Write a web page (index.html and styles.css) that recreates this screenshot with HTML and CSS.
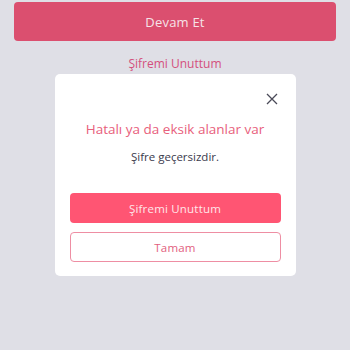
FILE: index.html
```html
<!DOCTYPE html>
<html lang="tr">
<head>
<meta charset="utf-8">
<link rel="stylesheet" href="styles.css">
</head>
<body>
<div class="page">
  <button class="primary-page">Devam Et</button>
  <a class="forgot-link">Şifremi Unuttum</a>
</div>
<div class="overlay">
  <div class="modal">
    <div class="modal-head">
      <svg class="close" width="12" height="12" viewBox="0 0 12 12"><path d="M1 1L11 11M11 1L1 11" stroke="#4a4a58" stroke-width="1.3" fill="none"/></svg>
    </div>
    <div class="title">Hatalı ya da eksik alanlar var</div>
    <div class="message">Şifre geçersizdir.</div>
    <button class="btn btn-fill">Şifremi Unuttum</button>
    <button class="btn btn-outline">Tamam</button>
  </div>
</div>
</body>
</html>
```
FILE: styles.css
```css
html, body { margin: 0; padding: 0; }
body {
  width: 350px;
  height: 350px;
  background: #dfdfe6;
  font-family: "Open Sans", "DejaVu Sans", sans-serif;
  overflow: hidden;
}
.page {
  display: flex;
  flex-direction: column;
  align-items: center;
  padding: 2px 14px 0;
}
.primary-page {
  width: 100%;
  height: 39px;
  border: none;
  border-radius: 4px;
  background: #db4f6f;
  color: #f6e3e8;
  font-family: inherit;
  font-size: 13px;
  letter-spacing: 0.2px;
}
.forgot-link {
  margin-top: 15px;
  color: #d4507d;
  font-size: 12px;
  line-height: 16px;
}
.overlay {
  position: fixed;
  inset: 0;
  display: flex;
  align-items: center;
  justify-content: center;
}
.modal {
  width: 241px;
  box-sizing: border-box;
  background: #fff;
  border-radius: 5px;
  padding: 19px 15px 14px;
  display: flex;
  flex-direction: column;
  align-items: stretch;
}
.modal-head {
  display: flex;
  justify-content: flex-end;
  padding-right: 3px;
  height: 14px;
}
.close { display: block; margin-top: 0; }
.title {
  margin-top: 13px;
  text-align: center;
  color: #e8607c;
  font-size: 13.5px;
  line-height: 18px;
}
.message {
  margin-top: 11px;
  text-align: center;
  color: #3a3a4c;
  font-size: 11.5px;
  line-height: 16px;
}
.btn {
  height: 30px;
  border-radius: 4px;
  font-family: inherit;
  font-size: 11.5px;
  letter-spacing: 0.2px;
}
.btn-fill {
  margin-top: 28px;
  background: #ff5573;
  border: none;
  color: #ffe6ea;
}
.btn-outline {
  margin-top: 9px;
  background: #fff;
  border: 1px solid #ee8ea3;
  color: #e2607e;
}
```
